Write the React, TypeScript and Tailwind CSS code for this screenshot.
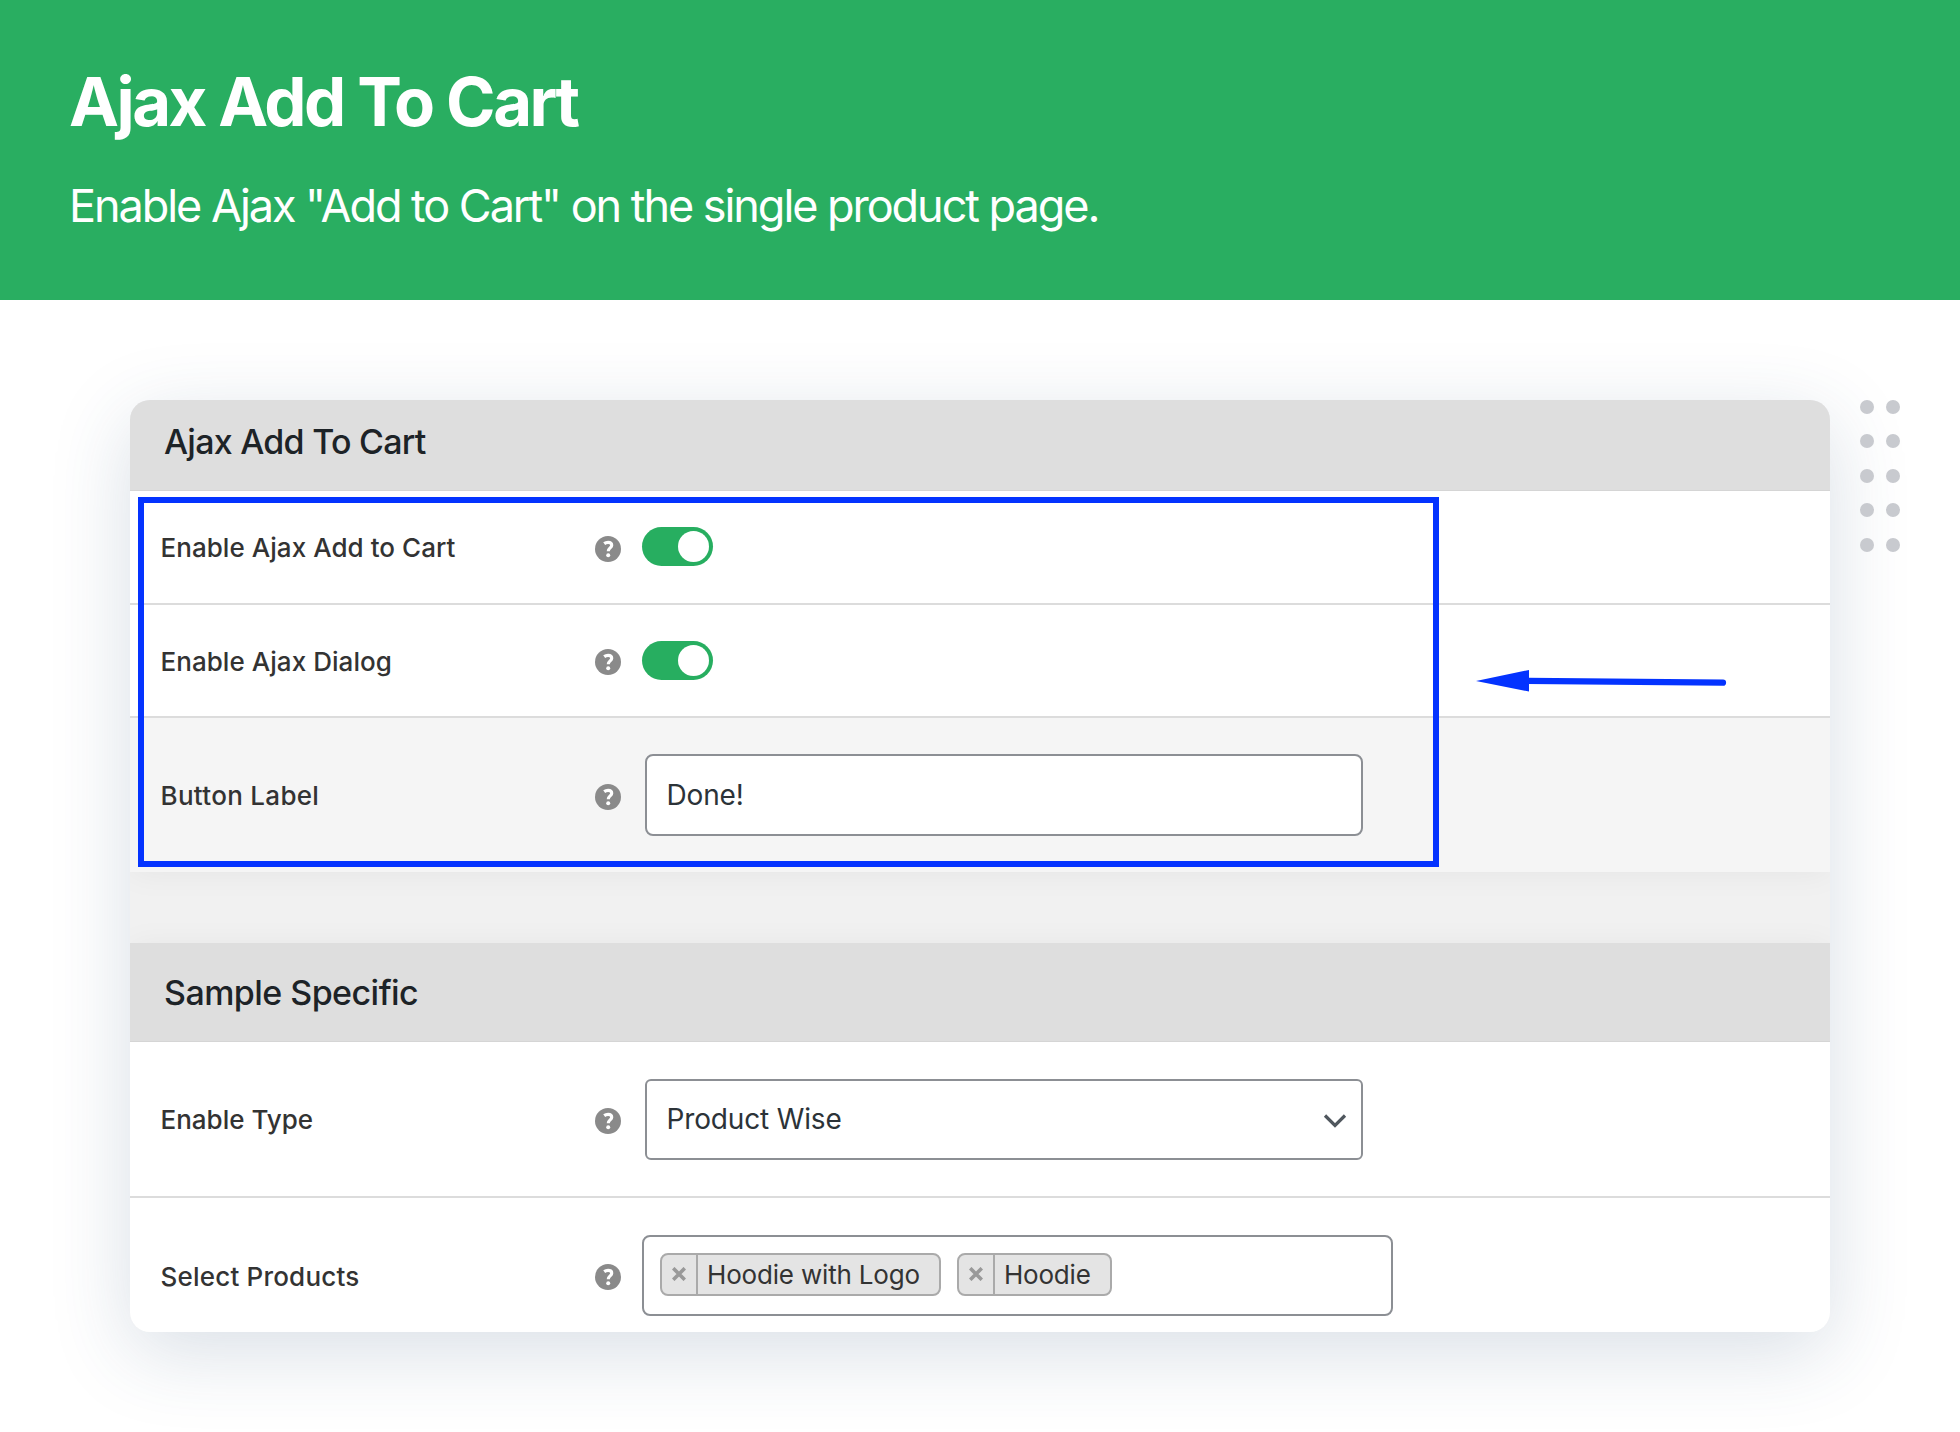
import type { ReactNode } from "react";

function HelpIcon() {
  return (
    <svg viewBox="0 0 26 26" className="w-[26px] h-[26px] shrink-0" fill="none">
      <circle cx="13" cy="13" r="13" fill="#8a8a8a" />
      <path
        d="M9.2 7.6 C10.4 6.7 11.8 6.3 13.1 6.3 C15.3 6.3 16.7 7.4 16.7 9.2 C16.7 11.9 13.3 11.9 13.3 15.2"
        stroke="#fff"
        strokeWidth="3.2"
      />
      <circle cx="13.2" cy="19.2" r="2" fill="#fff" />
    </svg>
  );
}

function Toggle() {
  return (
    <div className="flex justify-end w-[71px] h-[39px] p-1 rounded-full bg-[#27ae60]">
      <div className="size-[31px] rounded-full bg-white" />
    </div>
  );
}

function Tag({ label }: { label: string }) {
  return (
    <div className="flex h-[43px] border-2 border-[#aaa] rounded-lg bg-[#e4e4e4] overflow-hidden">
      <div className="flex items-center justify-center w-[36px] border-r-2 border-[#aaa]">
        <svg viewBox="0 0 14 14" className="size-[14px]" stroke="#999" strokeWidth="3.6">
          <path d="M1.2 1.2 L12.8 12.8 M12.8 1.2 L1.2 12.8" />
        </svg>
      </div>
      <span className="pl-[9px] pr-[19px] text-[26px] leading-[40px] tracking-[-0.18px] text-[#333] whitespace-nowrap">
        {label}
      </span>
    </div>
  );
}

function SectionHeader({ title, className }: { title: string; className: string }) {
  return (
    <div className={`flex pl-[34px] bg-[#dedede] border-b border-[#d5d5d5] ${className}`}>
      <h2 className="text-[34px] leading-[42px] font-medium text-[#1d2327]">{title}</h2>
    </div>
  );
}

function Row({ label, className, children }: { label: string; className: string; children: ReactNode }) {
  return (
    <div className={`flex items-center pl-[30.5px] ${className}`}>
      <div className="w-[434px] pt-0.5 text-[26px] leading-[32px] font-medium text-[#333]">{label}</div>
      <div className="pt-[3px]">
        <HelpIcon />
      </div>
      {children}
    </div>
  );
}

export default function App() {
  return (
    <div className="w-[1960px] h-[1432px] overflow-hidden bg-white font-['Inter',sans-serif]">
      {/* Banner */}
      <header className="h-[300px] pl-[69px] pt-[60px] bg-[#29ae61] text-white">
        <h1 className="text-[67px] leading-[84px] font-bold tracking-[-2.5px]">Ajax Add To Cart</h1>
        <p className="mt-[34px] text-[45px] leading-[56px] tracking-[-2.05px]">
          Enable Ajax "Add to Cart" on the single product page.
        </p>
      </header>

      <main className="relative flex items-start pt-[100px] pl-[130px]">
        <div className="w-[1700px] h-[932px] rounded-[20px] overflow-hidden bg-[#f1f1f1] shadow-[0_20px_80px_rgba(45,80,115,0.18)]">
          {/* Ajax settings */}
          <section className="shadow-[0_2px_30px_rgba(0,0,0,0.05)]">
            <SectionHeader title="Ajax Add To Cart" className="h-[91px] pt-[21px] tracking-[-0.75px]" />
            <Row label="Enable Ajax Add to Cart" className="h-[114px] bg-white border-b-2 border-[#dcdcdc] tracking-[0.05px]">
              <div className="ml-[21.5px] pb-px">
                <Toggle />
              </div>
            </Row>
            <Row label="Enable Ajax Dialog" className="h-[113px] bg-white border-b-2 border-[#dcdcdc] tracking-[0.05px]">
              <div className="ml-[21.5px]">
                <Toggle />
              </div>
            </Row>
            <Row label="Button Label" className="h-[154px] bg-[#f5f5f5] tracking-[0.3px]">
              <div className="flex items-center w-[718px] h-[82px] ml-6 pl-5 border-2 border-[#8c8f94] rounded-lg bg-white text-[28px] tracking-[-0.15px] text-[#2c3338]">
                Done!
              </div>
            </Row>
          </section>

          {/* Sample settings */}
          <section className="mt-[71px] shadow-[0_2px_30px_rgba(0,0,0,0.05)]">
            <SectionHeader title="Sample Specific" className="h-[99px] pt-[29px] tracking-[-0.55px]" />
            <Row label="Enable Type" className="h-[156px] bg-white border-b-2 border-[#dcdcdc]">
              <div className="flex items-center justify-between w-[718px] h-[81px] ml-6 pl-5 pr-[14px] border-2 border-[#8c8f94] rounded-md bg-white text-[28px] tracking-[-0.15px] text-[#2c3338]">
                Product Wise
                <svg viewBox="0 0 24 16" className="w-6 h-4 mt-[3px]" fill="none" stroke="#50575e" strokeWidth="3.2">
                  <path d="M2 2.5 L12 12.5 L22 2.5" />
                </svg>
              </div>
            </Row>
            <Row label="Select Products" className="h-[155px] bg-white tracking-[0.2px]">
              <div className="flex items-center gap-4 w-[751px] h-[81px] ml-[21.5px] pl-4 pb-[3px] border-2 border-[#8c8f94] rounded-lg bg-white">
                <Tag label="Hoodie with Logo" />
                <Tag label="Hoodie" />
              </div>
            </Row>
          </section>
        </div>

        {/* Dot pattern */}
        <div className="grid grid-cols-2 gap-x-3 gap-y-[20.4px] ml-[30px]">
          {Array.from({ length: 10 }, (_, i) => (
            <div key={i} className="size-[14px] rounded-full bg-[#c8cacf]" />
          ))}
        </div>

        {/* Highlight frame and arrow drawn over the settings */}
        <div className="absolute left-[138px] top-[197px] w-[1301px] h-[370px] border-6 border-[#0433ff]" />
        <svg viewBox="0 0 254 24" className="absolute left-[1475px] top-[369px] w-[254px] h-6" fill="#0433ff">
          <path d="M1 12 L54 1 V22.5 Z" />
          <path d="M52 11.9 L248 13.6" stroke="#0433ff" strokeWidth="6.2" strokeLinecap="round" />
        </svg>
      </main>
    </div>
  );
}
